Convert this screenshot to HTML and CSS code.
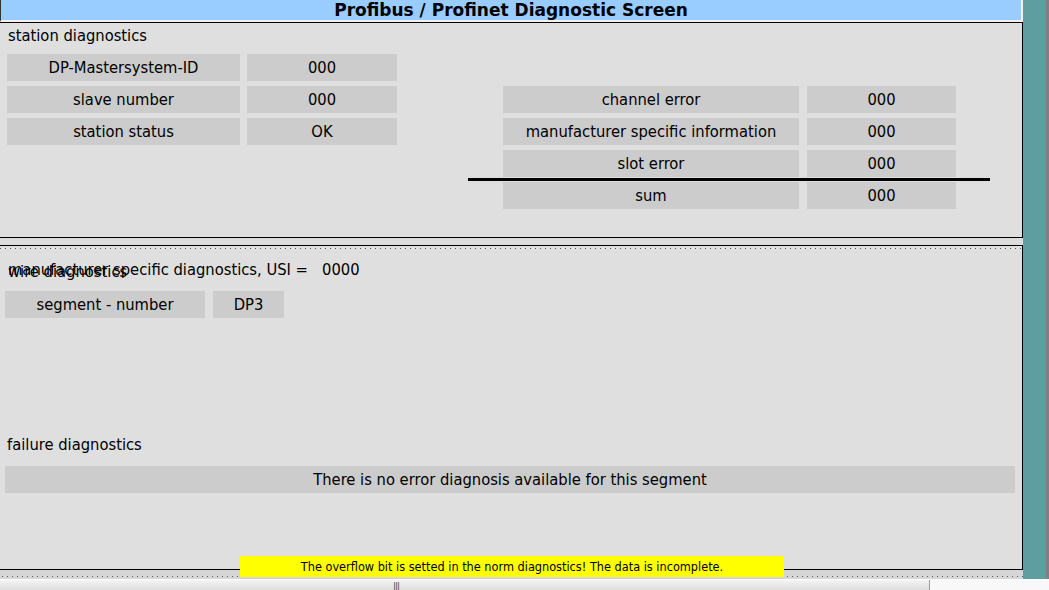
FILE: index.html
```html
<html lang="en">

<head>
    <meta charset="utf-8" />
    <title>Profibus / Profinet Diagnostic Screen</title>
    <link rel="stylesheet" href="styles.css">
</head>

<body>
    <div class="screen">
        <div class="main">
            <div class="title">Profibus / Profinet Diagnostic Screen</div>

            <div class="panel station">
                <div class="caption">station diagnostics</div>
                <div class="station-tables">
                    <div class="table">
                        <div class="row">
                            <div class="cell label wide">DP-Mastersystem-ID</div>
                            <div class="cell value">000</div>
                        </div>
                        <div class="row">
                            <div class="cell label wide">slave number</div>
                            <div class="cell value">000</div>
                        </div>
                        <div class="row">
                            <div class="cell label wide">station status</div>
                            <div class="cell value">OK</div>
                        </div>
                    </div>
                    <div class="table errors">
                        <div class="row">
                            <div class="cell label long">channel error</div>
                            <div class="cell value">000</div>
                        </div>
                        <div class="row">
                            <div class="cell label long">manufacturer specific information</div>
                            <div class="cell value">000</div>
                        </div>
                        <div class="row">
                            <div class="cell label long">slot error</div>
                            <div class="cell value">000</div>
                        </div>
                        <div class="row total">
                            <div class="cell label long">sum</div>
                            <div class="cell value">000</div>
                        </div>
                    </div>
                </div>
            </div>

            <div class="splitter"></div>

            <div class="panel segment">
                <div class="grip"></div>
                <div class="caption stacked">
                    wire diagnostics
                    <span class="caption-over">manufacturer specific diagnostics, USI = &nbsp;&nbsp;0000</span>
                </div>
                <div class="row seg-row">
                    <div class="cell seg-label">segment - number</div>
                    <div class="cell seg-value">DP3</div>
                </div>
                <div class="caption failure">failure diagnostics</div>
                <div class="cell message">There is no error diagnosis available for this segment</div>
            </div>

            <div class="footer-strip"></div>
            <div class="overflow-note">The overflow bit is setted in the norm diagnostics! The data is incomplete.</div>
        </div>
        <div class="side"></div>
        <div class="side-edge"></div>
    </div>
    <div class="hscroll">
        <div class="hscroll-thumb"><span class="grip-lines">|||</span></div>
    </div>
</body>

</html>
```

FILE: styles.css
```css
body {
    margin: 0;
    width: 1049px;
    height: 590px;
    overflow: hidden;
    font-family: "DejaVu Sans Condensed", "DejaVu Sans", sans-serif;
    font-size: 16.4px;
    color: #000;
    background: #dfdfdf;
}

.screen {
    display: flex;
    height: 579px;
}

.main {
    position: relative;
    width: 1023px;
    display: flex;
    flex-direction: column;
}

.side {
    width: 23px;
    background: #5f9ea0;
}

.side-edge {
    width: 3px;
    background: #808080;
}

.title {
    height: 20px;
    line-height: 20px;
    background: #99ccff;
    border-bottom: 2px solid #f2f2f2;
    border-left: 1px solid #333;
    border-right: 2px solid #f2f2f2;
    text-align: center;
    font-family: "DejaVu Sans", sans-serif;
    font-weight: bold;
    font-size: 17px;
}

.panel {
    background: #dfdfdf;
    border-right: 1px solid #000;
}

.station {
    height: 214px;
    border-top: 1px solid #000;
    border-bottom: 1px solid #000;
}

.caption {
    padding-left: 8px;
    height: 20px;
    line-height: 20px;
}

.station .caption {
    margin-top: 3px;
}

.station-tables {
    display: flex;
    padding-left: 7px;
    margin-top: 8px;
}

.table {
    display: flex;
    flex-direction: column;
    gap: 5px;
}

.errors {
    margin-left: 106px;
    margin-top: 32px;
}

.row {
    display: flex;
    gap: 7px;
}

.errors .row {
    gap: 8px;
}

.cell {
    height: 27px;
    line-height: 27px;
    background: #cccccc;
    text-align: center;
}

.wide {
    width: 233px;
}

.long {
    width: 296px;
}

.value {
    width: 150px;
}

.errors .value {
    width: 149px;
}

.total {
    position: relative;
}

.total::before {
    content: "";
    position: absolute;
    left: -35px;
    top: -4px;
    width: 522px;
    height: 3px;
    background: #000;
}

.splitter {
    height: 7px;
    background: #dcdcdc;
}

.segment {
    height: 323px;
    border-top: 1px solid #000;
    border-bottom: 1px solid #000;
    position: relative;
}

.grip {
    height: 4px;
    background-image: linear-gradient(to right, #555 1px, transparent 1px);
    background-size: 5px 1px;
    background-repeat: repeat-x;
    background-position: 0 2px;
}

.stacked {
    position: relative;
    margin-top: 12px;
}

.caption-over {
    position: absolute;
    left: 8px;
    top: -2px;
}

.seg-row {
    margin-top: 9px;
    padding-left: 5px;
    gap: 8px;
}

.seg-label {
    width: 200px;
}

.seg-value {
    width: 71px;
}

.failure {
    margin-top: 117px;
    padding-left: 7px;
}

.message {
    margin: 11px 0 0 5px;
    width: 1010px;
}

.footer-strip {
    height: 9px;
    background-color: #d6d6d6;
    background-image: linear-gradient(to right, #555 1px, transparent 1px);
    background-size: 5px 1px;
    background-repeat: repeat-x;
    background-position: 2px 6px;
}

.overflow-note {
    position: absolute;
    left: 240px;
    top: 556px;
    width: 544px;
    height: 21px;
    line-height: 21px;
    background: #ffff00;
    text-align: center;
    font-size: 12.6px;
}

.hscroll {
    height: 11px;
    background: #f8f8f8;
    border-top: 1px solid #fcfcfc;
}

.hscroll-thumb {
    width: 929px;
    height: 11px;
    background: linear-gradient(#f4f4f4, #dcdcdc);
    border-right: 1px solid #999;
    position: relative;
}

.grip-lines {
    position: absolute;
    left: 393px;
    top: 2px;
    font-size: 10px;
    line-height: 10px;
    color: #444;
    letter-spacing: -1px;
}
```
